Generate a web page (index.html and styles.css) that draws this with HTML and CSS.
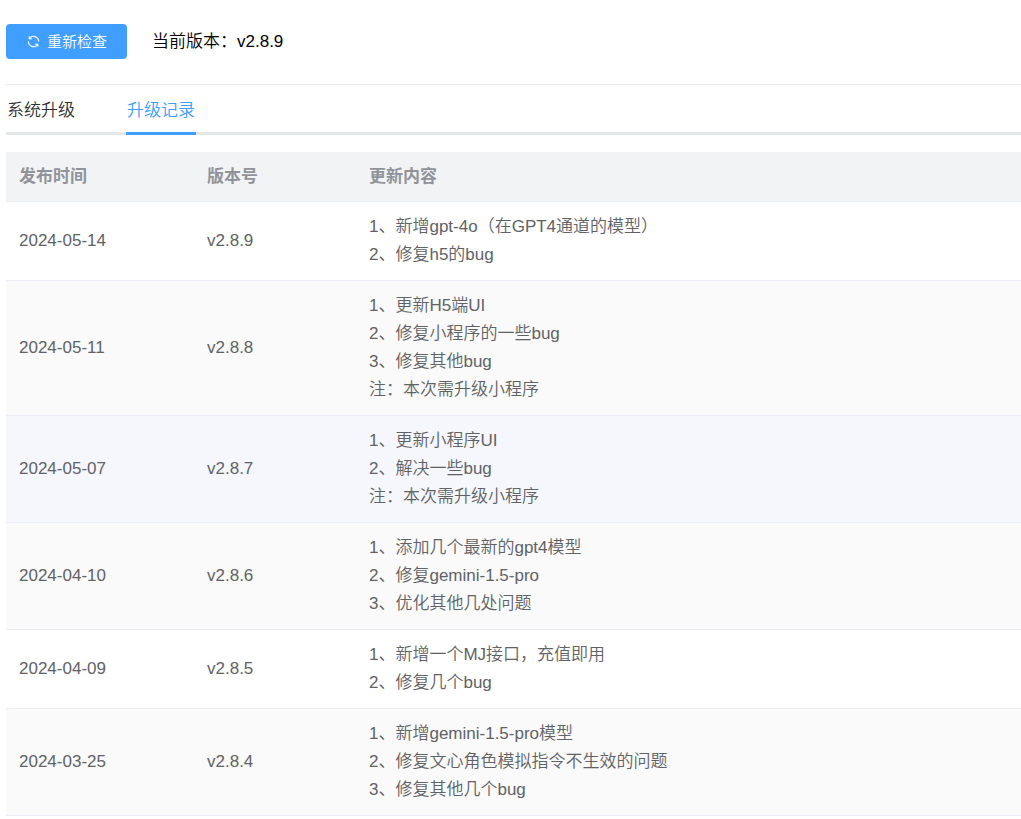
FILE: index.html
```html
<!DOCTYPE html>
<html lang="zh-CN">
<head>
<meta charset="utf-8">
<title>系统升级</title>
<link rel="stylesheet" href="styles.css">
</head>
<body>
<main class="page">
  <header class="toolbar">
    <button type="button" class="btn">
      <svg class="btn-icon" viewBox="0 0 1024 1024" aria-hidden="true"><path fill="currentColor" stroke="currentColor" stroke-width="12" d="M771.776 794.88A384 384 0 0 1 128 512h64a320 320 0 0 0 555.712 216.448H654.72a32 32 0 1 1 0-64h149.056a32 32 0 0 1 32 32v148.928a32 32 0 1 1-64 0v-50.56zM276.288 295.616h92.992a32 32 0 0 1 0 64H220.16a32 32 0 0 1-32-32V178.56a32 32 0 0 1 64 0v50.56A384 384 0 0 1 896.128 512h-64a320 320 0 0 0-555.776-216.384z"/></svg>
      <span>重新检查</span>
    </button>
    <span class="version">当前版本：v2.8.9</span>
  </header>
  <nav class="tabs">
    <button type="button" class="tab">系统升级</button>
    <button type="button" class="tab tab-active">升级记录</button>
  </nav>
  <table class="log">
    <colgroup><col class="col-date"><col class="col-version"><col></colgroup>
    <thead><tr><th>发布时间</th><th>版本号</th><th>更新内容</th></tr></thead>
    <tbody>
      <tr><td>2024-05-14</td><td>v2.8.9</td><td>1、新增gpt-4o（在GPT4通道的模型）<br>2、修复h5的bug</td></tr>
      <tr class="striped"><td>2024-05-11</td><td>v2.8.8</td><td>1、更新H5端UI<br>2、修复小程序的一些bug<br>3、修复其他bug<br>注：本次需升级小程序</td></tr>
      <tr class="hovered"><td>2024-05-07</td><td>v2.8.7</td><td>1、更新小程序UI<br>2、解决一些bug<br>注：本次需升级小程序</td></tr>
      <tr class="striped"><td>2024-04-10</td><td>v2.8.6</td><td>1、添加几个最新的gpt4模型<br>2、修复gemini-1.5-pro<br>3、优化其他几处问题</td></tr>
      <tr><td>2024-04-09</td><td>v2.8.5</td><td>1、新增一个MJ接口，充值即用<br>2、修复几个bug</td></tr>
      <tr class="striped"><td>2024-03-25</td><td>v2.8.4</td><td>1、新增gemini-1.5-pro模型<br>2、修复文心角色模拟指令不生效的问题<br>3、修复其他几个bug</td></tr>
    </tbody>
  </table>
</main>
</body>
</html>
```

FILE: styles.css
```css
* {
  box-sizing: border-box;
}

body {
  margin: 0;
  background: #fff;
  color: #303133;
  font-family: "Liberation Sans", "Noto Sans CJK SC", sans-serif;
  font-size: 17px;
  font-weight: 350;
}

button {
  margin: 0;
  border: 0;
  font-family: inherit;
  font-weight: inherit;
  cursor: pointer;
}

.page {
  padding-left: 6px;
}

.toolbar {
  display: flex;
  align-items: flex-start;
  gap: 25px;
  padding: 24px 0 25px;
  border-bottom: 1px solid #e9ebef;
}

.btn {
  display: flex;
  align-items: center;
  gap: 6px;
  height: 35px;
  padding: 0 20px;
  border-radius: 4px;
  background: #409eff;
  color: #fff;
  font-size: 15px;
  line-height: 34px;
}

.btn-icon {
  width: 15px;
  height: 15px;
}

.version {
  color: #000;
  font-size: 17px;
  line-height: 35px;
}

.tabs {
  display: flex;
  gap: 50px;
  margin-bottom: 17px;
  box-shadow: inset 0 -3px #e4e7ea;
}

.tab {
  min-width: 70px;
  height: 50px;
  padding: 0;
  border-bottom: 3px solid transparent;
  background: none;
  color: #303133;
  font-size: 17px;
}

.tab-active {
  border-color: #409eff;
  color: #409eff;
}

.log {
  width: 100%;
  border-collapse: separate;
  border-spacing: 0;
  table-layout: fixed;
  color: #606266;
  line-height: 28px;
}

.col-date {
  width: 188px;
}

.col-version {
  width: 162px;
}

.log th,
.log td {
  padding: 11px 13px;
  border-bottom: 1px solid #ebeef5;
  text-align: left;
  vertical-align: middle;
}

.log th {
  padding-bottom: 10px;
  background: #f2f3f5;
  color: #909399;
}

.striped {
  background: #fafafa;
}

.hovered {
  background: #f5f7fc;
}
```
